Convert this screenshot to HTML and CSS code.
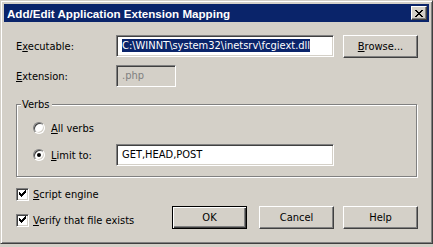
FILE: index.html
```html
<!DOCTYPE html>
<html>
<head>
<meta charset="utf-8">
<link rel="stylesheet" href="styles.css">
</head>
<body>
<div class="window">
  <div class="titlebar">
    <span class="title">Add/Edit Application Extension Mapping</span>
    <span class="close"><svg width="8" height="7" viewBox="0 0 8 7" shape-rendering="crispEdges"><path fill="#000" d="M0 0h2v1h-2zM6 0h2v1h-2zM1 1h2v1h-2zM5 1h2v1h-2zM2 2h4v1h-4zM3 3h2v1h-2zM2 4h4v1h-4zM1 5h2v1h-2zM5 5h2v1h-2zM0 6h2v1h-2zM6 6h2v1h-2z"/></svg></span>
  </div>
  <div class="client">
    <div class="row r1">
      <span class="lbl">E<u>x</u>ecutable:</span>
      <div class="edit exe"><span class="sel">C:\WINNT\system32\inetsrv\fcgiext.dll</span></div>
      <div class="btn browse"><span><u>B</u>rowse...</span></div>
    </div>
    <div class="row r2">
      <span class="lbl"><u>E</u>xtension:</span>
      <div class="edit ext disabled">.php</div>
    </div>
    <div class="group">
      <span class="legend">Verbs</span>
      <div class="opt o1"><span class="radio"></span><span class="optlbl"><u>A</u>ll verbs</span></div>
      <div class="opt o2"><span class="radio on"><span class="dot"></span></span><span class="optlbl"><u>L</u>imit to:</span><div class="edit verbs">GET,HEAD,POST</div></div>
    </div>
    <div class="bottom">
      <div class="checks">
        <div class="chk"><span class="box"><svg width="9" height="9" viewBox="0 0 9 9" shape-rendering="crispEdges"><path fill="#000" d="M1 2h1v3h-1zM2 3h1v3h-1zM3 4h1v3h-1zM4 3h1v3h-1zM5 2h1v3h-1zM6 1h1v3h-1zM7 0h1v3h-1z"/></svg></span><span><u>S</u>cript engine</span></div>
        <div class="chk"><span class="box"><svg width="9" height="9" viewBox="0 0 9 9" shape-rendering="crispEdges"><path fill="#000" d="M1 2h1v3h-1zM2 3h1v3h-1zM3 4h1v3h-1zM4 3h1v3h-1zM5 2h1v3h-1zM6 1h1v3h-1zM7 0h1v3h-1z"/></svg></span><span><u>V</u>erify that file exists</span></div>
      </div>
      <div class="buttons">
        <div class="btn default"><span>OK</span></div>
        <div class="btn cancel"><span>Cancel</span></div>
        <div class="btn help"><span>Help</span></div>
      </div>
    </div>
  </div>
</div>
</body>
</html>
```
FILE: styles.css
```css
html, body {
  margin: 0;
  padding: 0;
  background: #d4d0c8;
}
body {
  font-family: "DejaVu Sans Condensed", "Liberation Sans", sans-serif;
  font-size: 11px;
  line-height: 13px;
  color: #000;
}
u { text-decoration: underline; text-underline-offset: 1px; }

.window {
  width: 433px;
  height: 244px;
  box-sizing: border-box;
  background: #d4d0c8;
  border: 1px solid;
  border-color: #d4d0c8 #404040 #404040 #d4d0c8;
  box-shadow: inset 1px 1px 0 #fff, inset -1px -1px 0 #808080;
  padding: 3px;
  display: flex;
  flex-direction: column;
}

.titlebar {
  height: 18px;
  background: #0a246a;
  display: flex;
  align-items: center;
  padding-left: 3px;
  color: #fff;
}
.title {
  font-family: "Liberation Sans", sans-serif;
  font-weight: bold;
  font-size: 11.6px;
}
.close {
  margin-left: auto;
  margin-right: 2px;
  width: 16px;
  height: 14px;
  box-sizing: border-box;
  background: #d4d0c8;
  border: 1px solid;
  border-color: #fff #404040 #404040 #fff;
  box-shadow: inset -1px -1px 0 #808080;
  display: flex;
  align-items: center;
  justify-content: center;
}
.close svg { display: block; }

.client {
  padding: 0 11px 0 12px;
}

.row {
  display: flex;
  align-items: center;
}
.r1 { margin-top: 13px; height: 23px; }
.r2 { margin-top: 7px; height: 22px; }
.lbl { width: 100px; }

.edit {
  box-sizing: border-box;
  height: 22px;
  background: #fff;
  border: 1px solid;
  border-color: #808080 #fff #fff #808080;
  box-shadow: inset 1px 1px 0 #404040, inset -1px -1px 0 #d4d0c8;
  padding: 3px 4px 0 5px;
  white-space: nowrap;
  overflow: hidden;
}
.exe { width: 218px; align-self: flex-start; }
.sel { background: #0a246a; color: #fff; display: inline-block; height: 13px; }
.ext { width: 60px; }
.disabled { background: #d4d0c8; color: #808080; }

.btn {
  box-sizing: border-box;
  width: 75px;
  height: 23px;
  background: #d4d0c8;
  border: 1px solid;
  border-color: #fff #404040 #404040 #fff;
  box-shadow: inset -1px -1px 0 #808080;
  display: flex;
  align-items: center;
  justify-content: center;
}
.browse { margin-left: 9px; }
.btn.default {
  border: 1px solid #000;
  box-shadow: inset 1px 1px 0 #fff, inset -1px -1px 0 #404040, inset -2px -2px 0 #808080;
}

.group {
  position: relative;
  margin-top: 17px;
  height: 73px;
  box-sizing: border-box;
  border: 1px solid #808080;
  box-shadow: inset 1px 1px 0 #fff, 1px 1px 0 #fff;
  margin-right: 1px;
  padding: 17px 0 0 16px;
}
.legend {
  position: absolute;
  left: 4px;
  top: -7px;
  padding: 0 2px 0 1px;
  background: #d4d0c8;
}
.opt {
  display: flex;
  align-items: center;
}
.o1 { height: 12px; }
.o2 { margin-top: 10px; height: 22px; }
.radio {
  box-sizing: border-box;
  width: 12px;
  height: 12px;
  border-radius: 50%;
  background: #fff;
  border: 1px solid;
  border-color: #808080 #fff #fff #808080;
  box-shadow: inset 1px 1px 0 #404040, inset -1px -1px 0 #d4d0c8;
  display: flex;
  align-items: center;
  justify-content: center;
}
.dot {
  width: 4px;
  height: 4px;
  border-radius: 50%;
  background: #000;
}
.optlbl { margin-left: 6px; }
.o2 .optlbl { width: 65px; }
.verbs { width: 218px; }

.bottom {
  display: flex;
  align-items: flex-start;
}
.checks {
  margin-top: 11px;
  display: flex;
  flex-direction: column;
  gap: 13px;
}
.chk {
  display: flex;
  align-items: center;
  height: 13px;
}
.box {
  box-sizing: border-box;
  width: 13px;
  height: 13px;
  background: #fff;
  border: 1px solid;
  border-color: #808080 #fff #fff #808080;
  box-shadow: inset 1px 1px 0 #404040, inset -1px -1px 0 #d4d0c8;
  padding: 1px;
  margin-right: 4px;
}
.box svg { display: block; }
.buttons {
  margin-left: auto;
  margin-top: 29px;
  display: flex;
}
.cancel { margin-left: 12px; }
.help { margin-left: 9px; }
```
